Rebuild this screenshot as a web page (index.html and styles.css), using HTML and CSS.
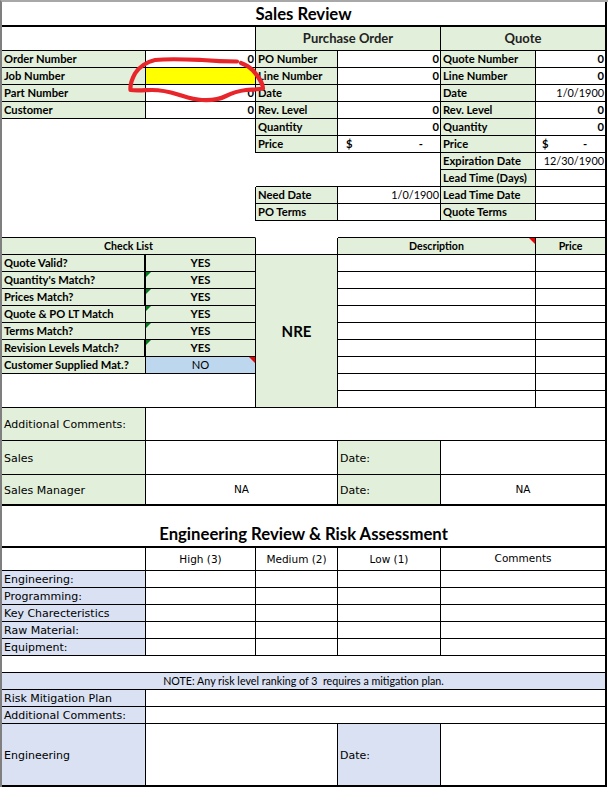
FILE: index.html
```html
<!DOCTYPE html>
<html lang="en">
<head>
<meta charset="utf-8">
<title>Sales Review</title>
<link rel="stylesheet" href="styles.css">
</head>
<body>
<div class="sheet">
<table class="grid">
<colgroup><col class="c1"><col class="c2"><col class="c3"><col class="c4"><col class="c5"><col class="c6"></colgroup>
<tr class="r-title"><td colspan="6" class="title thick nr">Sales Review</td></tr>
<tr class="r-head">
  <td colspan="2" class="void"></td>
  <td colspan="2" class="gr section edge">Purchase Order</td>
  <td colspan="2" class="gr section end">Quote</td>
</tr>
<tr><td class="gr lb">Order Number</td><td class="val">0</td><td class="gr lb">PO Number</td><td class="val">0</td><td class="gr lb">Quote Number</td><td class="val end">0</td></tr>
<tr><td class="gr lb">Job Number</td><td class="yellow"></td><td class="gr lb">Line Number</td><td class="val">0</td><td class="gr lb">Line Number</td><td class="val end">0</td></tr>
<tr><td class="gr lb">Part Number</td><td class="val">0</td><td class="gr lb">Date</td><td></td><td class="gr lb">Date</td><td class="val date end">1/0/1900</td></tr>
<tr><td class="gr lb">Customer</td><td class="val">0</td><td class="gr lb">Rev. Level</td><td class="val">0</td><td class="gr lb">Rev. Level</td><td class="val end">0</td></tr>
<tr>
  <td colspan="2" rowspan="7" class="void"></td>
  <td class="gr lb edge">Quantity</td><td class="val">0</td><td class="gr lb">Quantity</td><td class="val end">0</td>
</tr>
<tr><td class="gr lb edge">Price</td><td class="val"><span class="money"><span>$</span><span>-</span></span></td><td class="gr lb">Price</td><td class="val end"><span class="money money-q"><span>$</span><span>-</span></span></td></tr>
<tr><td colspan="2" rowspan="2"></td><td class="gr lb">Expiration Date</td><td class="val date end">12/30/1900</td></tr>
<tr><td class="gr lb">Lead Time (Days)</td><td class="end"></td></tr>
<tr><td class="gr lb edge">Need Date</td><td class="val date">1/0/1900</td><td class="gr lb">Lead Time Date</td><td class="end"></td></tr>
<tr><td class="gr lb edge">PO Terms</td><td></td><td class="gr lb">Quote Terms</td><td class="end"></td></tr>
<tr><td colspan="4" class="spacer end"></td></tr>
<tr>
  <td colspan="2" class="gr head">Check List</td>
  <td></td>
  <td colspan="2" class="gr head flag lid">Description</td>
  <td class="gr head lid end">Price</td>
</tr>
<tr><td class="gr lb strong">Quote Valid?</td><td class="gr yes">YES</td><td rowspan="9" class="gr nre">NRE</td><td colspan="2"></td><td class="end"></td></tr>
<tr><td class="gr lb strong">Quantity's Match?</td><td class="gr yes ok">YES</td><td colspan="2"></td><td class="end"></td></tr>
<tr><td class="gr lb strong">Prices Match?</td><td class="gr yes ok">YES</td><td colspan="2"></td><td class="end"></td></tr>
<tr><td class="gr lb">Quote &amp; PO LT Match</td><td class="gr yes ok">YES</td><td colspan="2"></td><td class="end"></td></tr>
<tr><td class="gr lb">Terms Match?</td><td class="gr yes ok">YES</td><td colspan="2"></td><td class="end"></td></tr>
<tr><td class="gr lb strong">Revision Levels Match?</td><td class="gr yes ok">YES</td><td colspan="2"></td><td class="end"></td></tr>
<tr><td class="gr lb">Customer Supplied Mat.?</td><td class="sky no flag">NO</td><td colspan="2"></td><td class="end"></td></tr>
<tr><td colspan="2" rowspan="2"></td><td colspan="2"></td><td class="end"></td></tr>
<tr><td colspan="2"></td><td class="end"></td></tr>
<tr class="r-33"><td class="gr tx">Additional Comments:</td><td colspan="5" class="end"></td></tr>
<tr class="r-34"><td class="gr tx">Sales</td><td colspan="2"></td><td class="gr tx">Date:</td><td colspan="2" class="end"></td></tr>
<tr class="r-31"><td class="gr tx thick">Sales Manager</td><td colspan="2" class="na up thick">NA</td><td class="gr tx thick">Date:</td><td colspan="2" class="na up thick end">NA</td></tr>
<tr class="r-etitle"><td colspan="6" class="etitle thick end">Engineering Review &amp; Risk Assessment</td></tr>
<tr class="r-ehead"><td></td><td class="na">High (3)</td><td class="na">Medium (2)</td><td class="na">Low (1)</td><td colspan="2" class="na comments end">Comments</td></tr>
<tr><td class="bl tx">Engineering:</td><td></td><td></td><td></td><td colspan="2" class="end"></td></tr>
<tr><td class="bl tx">Programming:</td><td></td><td></td><td></td><td colspan="2" class="end"></td></tr>
<tr><td class="bl tx">Key Charecteristics</td><td></td><td></td><td></td><td colspan="2" class="end"></td></tr>
<tr><td class="bl tx">Raw Material:</td><td></td><td></td><td></td><td colspan="2" class="end"></td></tr>
<tr><td class="bl tx">Equipment:</td><td></td><td></td><td></td><td colspan="2" class="end"></td></tr>
<tr><td colspan="6" class="end"></td></tr>
<tr><td colspan="6" class="bl note end">NOTE: Any risk level ranking of 3&nbsp; requires a mitigation plan.</td></tr>
<tr><td class="bl tx">Risk Mitigation Plan</td><td colspan="5" class="end"></td></tr>
<tr><td class="bl tx">Additional Comments:</td><td colspan="5" class="end"></td></tr>
<tr class="r-sign"><td class="bl tx thick">Engineering</td><td colspan="2" class="thick"></td><td class="bl tx thick">Date:</td><td colspan="2" class="thick end"></td></tr>
</table>
<svg class="scribble" width="608" height="110" viewBox="0 0 608 110" aria-hidden="true">
  <path d="M237 61.5C228 61.5 214 61 202 60C190 59.5 170 58.5 155 60C147 61.5 139 67 135 73.5C132 79 130 85 130.5 90C137 91 146 90 152 90C160 90 170 92 178 94.5C186 97 194 100 202 100C210 100.5 220 99 226 96C232 93 238 91 246 90C252 89.5 258 89.5 263 88.5C263 84 258 76 253 70.5C249 66.5 244 64 241 63"/>
</svg>
</div>
</body>
</html>
```

FILE: styles.css
```css
html, body { margin: 0; padding: 0; background: #fff; }
body {
  width: 608px;
  height: 787px;
  box-sizing: border-box;
  border-top: 2px solid #a8a8a8;
  border-left: 2px solid #7f7f7f;
  overflow: hidden;
  color: #000;
  font-family: Lato, "Liberation Sans", sans-serif;
  font-size: 11.2px;
}
.sheet { position: relative; width: 605px; }
.scribble { position: absolute; left: -2px; top: -2px; pointer-events: none; }
.scribble path { fill: none; stroke: #e8252b; stroke-width: 4.2; stroke-linecap: round; stroke-linejoin: round; }

.grid { border-collapse: separate; border-spacing: 0; table-layout: fixed; width: 605px; }
.c1 { width: 144px; } .c2 { width: 110px; } .c3 { width: 82px; }
.c4 { width: 103px; } .c5 { width: 95px; } .c6 { width: 71px; }
.grid tr { height: 17px; }
.grid td {
  position: relative;
  padding: 0 2px;
  line-height: 14px;
  white-space: nowrap;
  overflow: hidden;
  border-right: 1px solid #000;
  border-bottom: 1px solid #000;
  box-sizing: border-box;
}
.grid td.end { border-right: 2px solid #000; }
.grid td.thick { border-bottom: 2px solid #000; }
.grid td.nr { border-right: 2px solid #000; }
.grid td.strong { border-right: 2px solid #000; }
.grid td.void { border-right-color: transparent; }
.grid td.spacer { border-bottom-color: transparent; }
.edge { box-shadow: -1px 0 0 #000; }
.lid { box-shadow: 0 -1px 0 #000; }

.grid .r-title { height: 25px; }
.grid .r-head { height: 24px; }
.grid .r-33 { height: 33px; }
.grid .r-34 { height: 34px; }
.grid .r-31 { height: 31px; }
.grid .r-etitle { height: 42px; }
.grid .r-ehead { height: 23px; }
.grid .r-sign { height: 63px; }

.gr { background: #e2efda; }
.bl { background: #d9e1f2; }
.sky { background: #bdd7ee; }
.yellow { background: #ffff00; }

.title { text-align: center; font-weight: 700; font-size: 16.7px; }
.grid td.etitle { text-align: center; font-weight: 700; font-size: 16.7px; vertical-align: bottom; padding-bottom: 3px; line-height: 18px; }
.grid td.section { text-align: center; font-size: 13px; font-weight: 700; color: #222; padding-bottom: 2px; }
.lb { font-weight: 700; }
.head { text-align: center; font-weight: 700; font-size: 10.6px; }
.val { text-align: right; font-weight: 700; }
.date { font-weight: 400; font-size: 10.9px; }
.grid td.val { padding-right: 1px; }
.money { display: flex; justify-content: space-between; padding: 0 16px 0 6px; }
.money-q { padding: 0 17px 0 4px; }
.yes, .no { text-align: center; font-weight: 700; }
.no { font-weight: 400; }
.nre { text-align: center; font-weight: 700; font-size: 15px; }
.grid td.tx { font-family: "DejaVu Sans", sans-serif; font-size: 11px; padding-top: 2px; }
.na { text-align: center; font-family: "DejaVu Sans", sans-serif; font-size: 10.5px; }
.grid td.up { padding-bottom: 2px; }
.grid td.comments { vertical-align: top; padding-top: 3px; }
.note { text-align: center; font-size: 10.7px; }

.ok::before {
  content: "";
  position: absolute;
  left: 0;
  top: 0;
  width: 0;
  height: 0;
  border-top: 5px solid #007a1c;
  border-right: 5px solid transparent;
}
.flag::after {
  content: "";
  position: absolute;
  right: 0;
  top: 0;
  width: 0;
  height: 0;
  border-top: 6px solid #f00000;
  border-left: 6px solid transparent;
}
```
